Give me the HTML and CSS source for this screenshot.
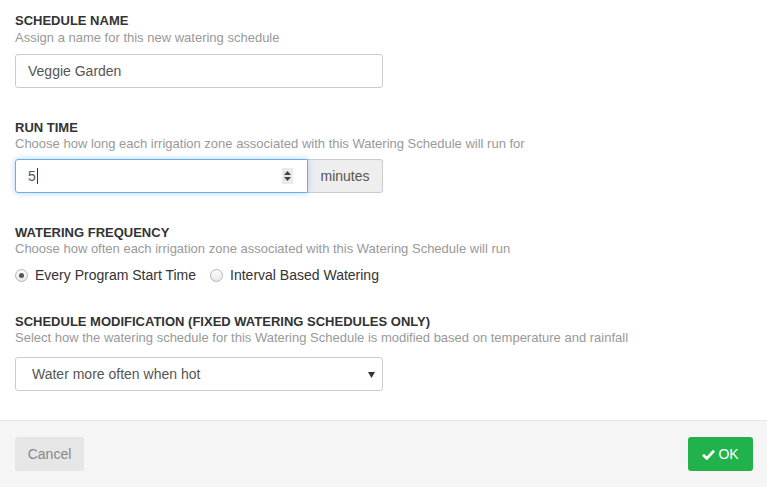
FILE: index.html
```html
<!DOCTYPE html>
<html lang="en">
<head>
    <meta charset="UTF-8">
    <title>Watering Schedule</title>
    <link rel="stylesheet" href="styles.css">
</head>
<body>

    <div class="modal-body">
        <div class="field field-first">
            <label class="field-title" for="name">SCHEDULE NAME</label>
            <p class="field-help">Assign a name for this new watering schedule</p>
            <input class="text-input" type="text" id="name" value="Veggie Garden">
        </div>

        <div class="field">
            <div class="field-title">RUN TIME</div>
            <p class="field-help">Choose how long each irrigation zone associated with this Watering Schedule will run for</p>
            <div class="input-group">
                <!-- focused number field, drawn so the caret and spinner show -->
                <div class="text-input number-input focused">
                    <span>5</span><span class="caret"></span>
                    <svg class="spinner" width="11" height="16" viewBox="0 0 11 16">
                        <rect width="11" height="16" fill="#eaeaea"/>
                        <path d="M2 7 L5.5 3 L9 7 Z" fill="#444"/>
                        <path d="M2 9 L5.5 13 L9 9 Z" fill="#444"/>
                    </svg>
                </div>
                <span class="addon">minutes</span>
            </div>
        </div>

        <div class="field field-radio">
            <div class="field-title">WATERING FREQUENCY</div>
            <p class="field-help">Choose how often each irrigation zone associated with this Watering Schedule will run</p>
            <div class="radio-row">
                <label class="radio">
                    <input type="radio" name="freq" checked>
                    <span class="dot"></span>
                    Every Program Start Time
                </label>
                <label class="radio">
                    <input type="radio" name="freq">
                    <span class="dot"></span>
                    Interval Based Watering
                </label>
            </div>
        </div>

        <div class="field">
            <div class="field-title">SCHEDULE MODIFICATION (FIXED WATERING SCHEDULES ONLY)</div>
            <p class="field-help">Select how the watering schedule for this Watering Schedule is modified based on temperature and rainfall</p>
            <div class="select-wrap">
                <select class="select">
                    <option>Water more often when hot</option>
                    <option>Water less often when cool</option>
                    <option>No modification</option>
                </select>
                <svg class="select-arrow" width="7" height="6" viewBox="0 0 7 6">
                    <path d="M0 0 H7 L3.5 6 Z" fill="#333"/>
                </svg>
            </div>
        </div>
    </div>

    <div class="modal-footer">
        <button class="btn btn-cancel" type="button">Cancel</button>
        <button class="btn btn-ok" type="button">
            <svg width="13" height="11" viewBox="0 0 13 11">
                <path d="M1 5.8 L4.8 9.4 L12 1.8" fill="none" stroke="#fff" stroke-width="2.8"/>
            </svg>
            OK
        </button>
    </div>

</body>
</html>
```

FILE: styles.css
```css
body {
    margin: 0;
    font-family: "Liberation Sans", Arial, sans-serif;
    color: #333;
    background-color: white;
}

.modal-body {
    padding: 13px 15px 29px 15px;
}

.field {
    margin-bottom: 32px;
}

.field:last-child {
    margin-bottom: 0;
}

.field-radio {
    margin-bottom: 29px;
}

.field-title {
    display: block;
    font-size: 13px;
    font-weight: bold;
    line-height: 16px;
    color: #333;
}

.field-first .field-title {
    margin-bottom: 1px;
}

.field-help {
    margin: 0 0 8px 0;
    font-size: 13px;
    line-height: 16px;
    color: #999;
}

.text-input {
    box-sizing: border-box;
    width: 368px;
    height: 34px;
    padding: 0 12px;
    border: 1px solid #ccc;
    border-radius: 3px;
    font-family: inherit;
    font-size: 14px;
    color: #555;
    background: white;
    outline: none;
}

.input-group {
    display: flex;
    width: 368px;
    margin-top: -1px;
}

.number-input {
    position: relative;
    display: flex;
    align-items: center;
    flex: 1;
    border-radius: 3px 0 0 3px;
}

.number-input.focused {
    border-color: #66afe9;
    box-shadow: 0 0 6px rgba(102, 175, 233, 0.5);
}

.caret {
    display: inline-block;
    width: 1px;
    height: 16px;
    margin-left: 1px;
    background-color: #333;
}

.spinner {
    position: absolute;
    right: 14px;
    top: 8px;
}

.addon {
    box-sizing: border-box;
    width: 75px;
    height: 34px;
    line-height: 32px;
    text-align: center;
    font-size: 14px;
    color: #555;
    background-color: #eee;
    border: 1px solid #ccc;
    border-left: none;
    border-radius: 0 3px 3px 0;
}

.radio-row {
    display: flex;
    gap: 14px;
    height: 20px;
    align-items: center;
}

.radio {
    display: flex;
    align-items: center;
    gap: 7px;
    font-size: 14px;
    color: #333;
}

.radio input {
    display: none;
}

.dot {
    box-sizing: border-box;
    width: 13px;
    height: 13px;
    border: 1px solid #b5b5b5;
    border-radius: 50%;
    background: linear-gradient(#fcfcfc, #e8e8e8);
    position: relative;
}

.radio input:checked + .dot::after {
    content: "";
    position: absolute;
    left: 3px;
    top: 3px;
    width: 5px;
    height: 5px;
    border-radius: 50%;
    background-color: #555;
}

.select-wrap {
    position: relative;
    width: 368px;
    margin-top: 11px;
}

.select {
    display: block;
    box-sizing: border-box;
    width: 100%;
    height: 34px;
    padding: 0 16px;
    border: 1px solid #ccc;
    border-radius: 3px;
    font-family: inherit;
    font-size: 14px;
    color: #555;
    background: white;
    appearance: none;
    -webkit-appearance: none;
    outline: none;
}

.select-arrow {
    position: absolute;
    right: 8px;
    top: 15px;
    pointer-events: none;
}

.modal-footer {
    display: flex;
    justify-content: space-between;
    padding: 16px 14px 16px 15px;
    background-color: #f5f5f5;
    border-top: 1px solid #e5e5e5;
}

.btn {
    height: 34px;
    border: none;
    border-radius: 3px;
    font-family: inherit;
    font-size: 14px;
    cursor: pointer;
}

.btn-cancel {
    width: 69px;
    background-color: #e6e6e6;
    color: #888;
}

.btn-ok {
    display: flex;
    align-items: center;
    justify-content: center;
    gap: 3px;
    width: 65px;
    background-color: #22b24c;
    color: white;
}
```
